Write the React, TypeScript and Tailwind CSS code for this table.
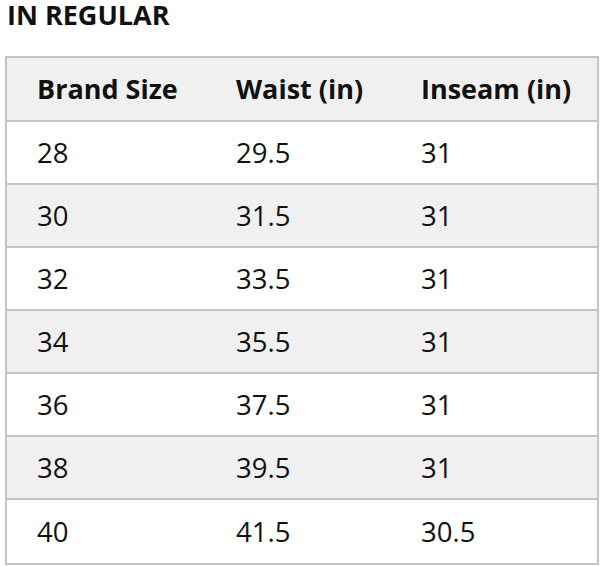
import React from "react";

const rows: [string, string, string][] = [
  ["28", "29.5", "31"],
  ["30", "31.5", "31"],
  ["32", "33.5", "31"],
  ["34", "35.5", "31"],
  ["36", "37.5", "31"],
  ["38", "39.5", "31"],
  ["40", "41.5", "30.5"],
];

export default function App() {
  return (
    <div className="w-[600px] h-[566px] bg-white overflow-hidden text-[#111111]" style={{ fontFamily: '"Open Sans", "Noto Sans", sans-serif' }}>
      <div className="h-[56px] pl-[7px]">
        <h1 className="text-[27px] font-bold leading-[30px]">IN REGULAR</h1>
      </div>
      <div className="ml-[5px] w-[594px] border-2 border-[#c4c4c4]">
        <div className="grid grid-cols-[199px_185px_1fr] h-[64px] items-center bg-[#f0f0f0] border-b-2 border-[#c4c4c4] box-border font-bold text-[27px]">
          <div className="pl-[30px]">Brand Size</div>
          <div className="pl-[30px]">Waist (in)</div>
          <div className="pl-[30px]">Inseam (in)</div>
        </div>
        {rows.map((r, i) => (
          <div
            key={i}
            className={
              "grid grid-cols-[199px_185px_1fr] h-[63px] items-center box-border text-[27.5px] " +
              (i % 2 === 1 ? "bg-[#f0f0f1] " : "bg-white ") +
              (i < rows.length - 1 ? "border-b-2 border-[#c4c4c4]" : "")
            }
          >
            <div className="pl-[30px]">{r[0]}</div>
            <div className="pl-[30px]">{r[1]}</div>
            <div className="pl-[30px]">{r[2]}</div>
          </div>
        ))}
      </div>
    </div>
  );
}
